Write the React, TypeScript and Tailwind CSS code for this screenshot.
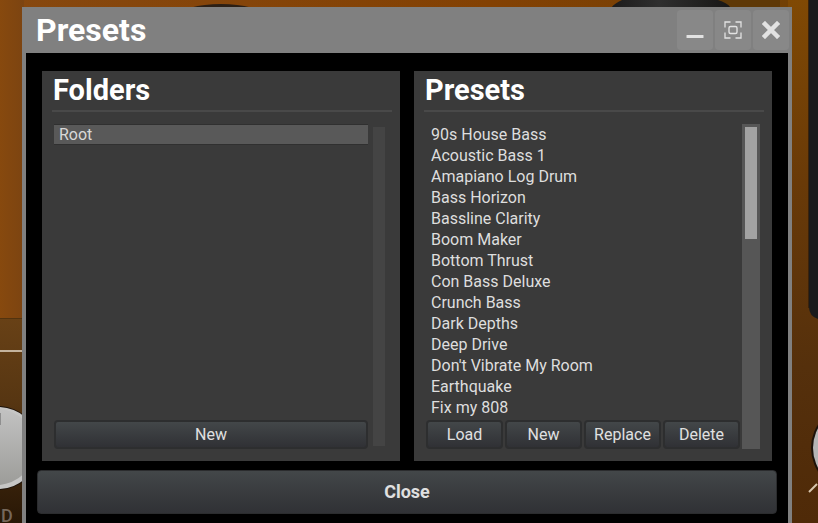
import { useState } from "react";

const FOLDERS = ["Root"];

const PRESETS = [
  "90s House Bass",
  "Acoustic Bass 1",
  "Amapiano Log Drum",
  "Bass Horizon",
  "Bassline Clarity",
  "Boom Maker",
  "Bottom Thrust",
  "Con Bass Deluxe",
  "Crunch Bass",
  "Dark Depths",
  "Deep Drive",
  "Don't Vibrate My Room",
  "Earthquake",
  "Fix my 808",
];

function Backdrop() {
  return (
    <div className="absolute inset-0 overflow-hidden bg-[#7e4107]">
      {/* top edge with the two dark dials */}
      <svg className="absolute top-0 left-0" width="818" height="8" viewBox="0 0 818 8">
        <defs>
          <linearGradient id="top" x1="0" x2="1" y1="0" y2="0">
            <stop offset="0" stopColor="#87480f" />
            <stop offset="0.6" stopColor="#834103" />
            <stop offset="1" stopColor="#704006" />
          </linearGradient>
          <linearGradient id="dial" x1="0" x2="1" y1="0" y2="0">
            <stop offset="0" stopColor="#1c1b1b" />
            <stop offset="0.4" stopColor="#2f2f2f" />
            <stop offset="1" stopColor="#171615" />
          </linearGradient>
        </defs>
        <rect width="818" height="8" fill="url(#top)" />
        <ellipse cx="221" cy="16" rx="42" ry="12" fill="#2b1f15" />
        <rect x="718" width="62" height="8" fill="#5e3806" />
        <path d="M611 8C614 4 618 2 622 0H718C724 2 728 4 731 8Z" fill="url(#dial)" />
      </svg>

      {/* left strip */}
      <svg className="absolute top-0 left-0" width="24" height="523" viewBox="0 0 24 523">
        <defs>
          <linearGradient id="orangeL" x1="0" x2="1" y1="0" y2="0">
            <stop offset="0" stopColor="#87490e" />
            <stop offset="1" stopColor="#7c4411" />
          </linearGradient>
          <linearGradient id="brownL" x1="0" x2="0" y1="0" y2="1">
            <stop offset="0" stopColor="#684116" />
            <stop offset="0.4" stopColor="#573612" />
            <stop offset="1" stopColor="#281706" />
          </linearGradient>
          <linearGradient id="knobL" x1="0" x2="0" y1="0" y2="1">
            <stop offset="0" stopColor="#c2c2c2" />
            <stop offset="1" stopColor="#9c9c99" />
          </linearGradient>
        </defs>
        <rect width="24" height="319" fill="url(#orangeL)" />
        <rect y="318" width="24" height="205" fill="url(#brownL)" />
        <rect y="318" width="24" height="1" fill="#52330f" />
        <rect y="350" width="24" height="2" fill="#c4b39d" />
        <circle cx="-2" cy="448" r="42" fill="#1c120a" />
        <circle cx="-2" cy="448" r="41" fill="#c6c6c5" />
        <circle cx="-3" cy="447" r="38" fill="url(#knobL)" />
        <rect y="413" width="1" height="12" fill="#8f8f8f" />
        <text x="1" y="522" fill="#75675a" fontFamily="Roboto, sans-serif" fontSize="18" fontWeight="500">
          D
        </text>
      </svg>

      {/* right strip */}
      <svg className="absolute top-0 right-0" width="30" height="523" viewBox="788 0 30 523">
        <defs>
          <linearGradient id="orangeR" x1="0" x2="0" y1="0" y2="1">
            <stop offset="0" stopColor="#804904" />
            <stop offset="0.35" stopColor="#693a08" />
            <stop offset="0.7" stopColor="#55300c" />
            <stop offset="1" stopColor="#4f2a08" />
          </linearGradient>
        </defs>
        <rect x="788" width="30" height="523" fill="url(#orangeR)" />
        <path d="M809 0H818V319Q809 316 809 307Z" fill="#1a1a1b" />
        <rect x="808" width="1" height="308" fill="#3b220a" />
        <circle cx="854" cy="448" r="43" fill="#1c120a" />
        <circle cx="854" cy="448" r="41" fill="#b5b5b5" />
        <path d="M809 492L817 484" stroke="#d8c6ae" strokeWidth="2" />
      </svg>
    </div>
  );
}

function MinimizeIcon() {
  return (
    <svg width="18" height="18" viewBox="0 0 18 18" aria-hidden="true">
      <rect x="0.5" y="14" width="17" height="3" rx="0.5" fill="#e2e2e2" />
    </svg>
  );
}

function FocusIcon() {
  return (
    <svg width="18" height="18" viewBox="0 0 18 18" fill="none" stroke="#e2e2e2" aria-hidden="true">
      <path d="M1 6.5V1H6.5M11.5 1H17V6.5M17 11.5V17H11.5M6.5 17H1V11.5" strokeWidth="1.3" />
      <rect x="5" y="5.5" width="8" height="7" rx="1.5" strokeWidth="1.4" />
    </svg>
  );
}

function CloseIcon() {
  return (
    <svg width="18" height="18" viewBox="0 0 18 18" fill="none" stroke="#e2e2e2" aria-hidden="true">
      <path d="M3 3L15 15M15 3L3 15" strokeWidth="4.5" strokeLinecap="square" />
    </svg>
  );
}

function TitleButton({ label, children }: { label: string; children: React.ReactNode }) {
  return (
    <button
      aria-label={label}
      className="w-9 h-10 flex items-center justify-center rounded-sm bg-[#888888] hover:bg-[#959595]"
    >
      {children}
    </button>
  );
}

function SmallButton({ children }: { children: React.ReactNode }) {
  return (
    <button className="flex-1 h-[29px] rounded-sm border-2 border-[#2d2e2f] bg-linear-to-b from-[#434749] to-[#303135] text-base leading-5 text-[#e0e0e0] hover:from-[#505557]">
      {children}
    </button>
  );
}

type PanelProps = {
  title: string;
  items: string[];
  selected: string | null;
  onSelect: (item: string) => void;
  scrollbar: React.ReactNode;
  children: React.ReactNode;
};

function Panel({ title, items, selected, onSelect, scrollbar, children }: PanelProps) {
  return (
    <section className="flex-1 min-w-0 flex flex-col bg-[#3a3a3a] pl-[10px] pr-2 pb-3">
      <h2 className="h-[39px] pl-px text-[29px] leading-[38px] font-bold text-white">{title}</h2>
      <div className="h-[2px] bg-[#494949]" />

      <div className="mt-3 pl-[2px] pr-1 flex flex-1 gap-[2px]">
        <div className="flex-1 min-w-0 flex flex-col justify-between gap-[2px]">
          <ul>
            {items.map((item) => (
              <li key={item}>
                <button
                  onClick={() => onSelect(item)}
                  className={
                    item === selected
                      ? "block w-full h-[21px] px-[5px] text-left text-base leading-[19px] text-[#d8d8d8] bg-[#595959] border-y border-[#303030]"
                      : "block w-full h-[21px] px-[5px] text-left text-base leading-[21px] text-[#dedede] hover:bg-[#444444]"
                  }
                >
                  {item}
                </button>
              </li>
            ))}
          </ul>
          <div className="flex gap-[2px]">{children}</div>
        </div>
        {scrollbar}
      </div>
    </section>
  );
}

export default function App() {
  const [folder, setFolder] = useState("Root");
  const [preset, setPreset] = useState<string | null>(null);

  return (
    <div className="relative min-h-screen pt-[7px] pl-[22px] pr-[26px] flex font-[Roboto,sans-serif]">
      <Backdrop />

      <main className="relative flex-1 min-w-0 flex flex-col bg-[#808080]">
        <header className="h-[46px] pl-[14px] pr-[3px] flex items-center justify-between">
          <h1 className="text-[32px] leading-[46px] font-bold text-white">Presets</h1>
          <div className="flex gap-[2px]">
            <TitleButton label="Minimize">
              <MinimizeIcon />
            </TitleButton>
            <TitleButton label="Fit to screen">
              <FocusIcon />
            </TitleButton>
            <TitleButton label="Close window">
              <CloseIcon />
            </TitleButton>
          </div>
        </header>

        <div className="flex-1 mx-1 flex flex-col gap-[9px] px-[11px] pt-[18px] pb-[9px] bg-black">
          <div className="flex-1 flex gap-[14px] px-[5px]">
            <Panel
              title="Folders"
              items={FOLDERS}
              selected={folder}
              onSelect={setFolder}
              scrollbar={
                <div className="w-[18px] px-[3px] py-[3px] flex">
                  <div className="flex-1 bg-[#444444]" />
                </div>
              }
            >
              <SmallButton>New</SmallButton>
            </Panel>

            <Panel
              title="Presets"
              items={PRESETS}
              selected={preset}
              onSelect={setPreset}
              scrollbar={
                <div className="w-[18px] p-[3px] bg-[#565656]">
                  <div className="h-[35%] bg-[#a2a2a2]" />
                </div>
              }
            >
              <SmallButton>Load</SmallButton>
              <SmallButton>New</SmallButton>
              <SmallButton>Replace</SmallButton>
              <SmallButton>Delete</SmallButton>
            </Panel>
          </div>

          <button className="h-11 rounded-sm border border-[#2b2c2e] bg-linear-to-b from-[#434749] to-[#303135] text-lg font-bold text-[#e0e0e0] hover:from-[#505557]">
            Close
          </button>
        </div>
      </main>
    </div>
  );
}
